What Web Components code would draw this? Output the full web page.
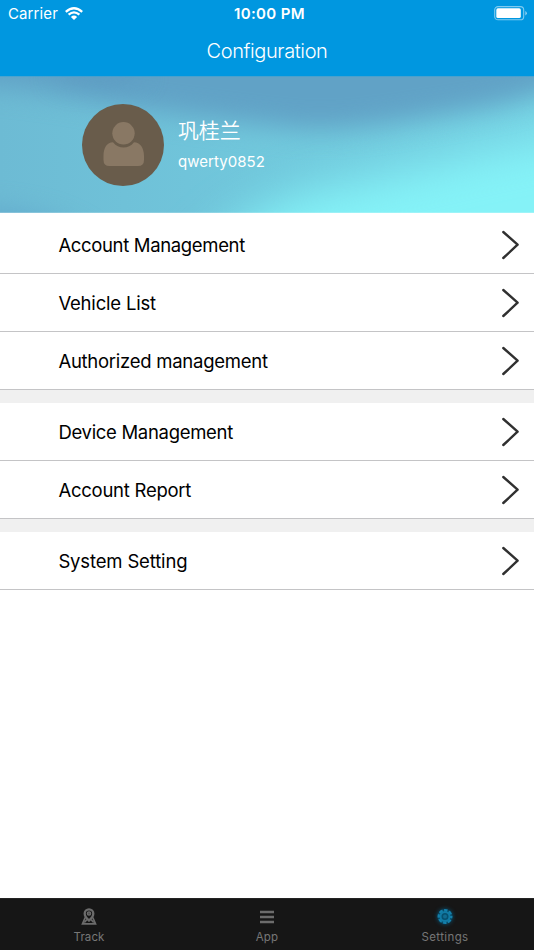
<!DOCTYPE html>
<html lang="en">
<head>
<meta charset="utf-8">
<title>Configuration</title>
<style>
html,body{margin:0;height:100%;background:#fff;overflow:hidden}
body{font-family:Inter,"Noto Sans CJK SC",sans-serif}
</style>
</head>
<body>
<settings-screen></settings-screen>
<script>
function define(name, html, setup) {
  const t = document.createElement('template');
  t.innerHTML = html;
  customElements.define(name, class extends HTMLElement {
    connectedCallback() {
      if (this.shadowRoot) return;
      this.attachShadow({ mode: 'open' }).append(t.content.cloneNode(true));
      if (setup) setup(this, this.shadowRoot);
    }
  });
}

/* Single-line label whose tracking is adjusted to span the given width. */
define('fit-label', `<style>:host{display:block;white-space:nowrap;width:max-content}span{display:inline-block}</style><span></span>`, (el, root) => {
  const s = root.querySelector('span');
  s.textContent = el.getAttribute('text');
  const w = parseFloat(el.getAttribute('span'));
  const n = s.textContent.length;
  const now = s.getBoundingClientRect().width;
  s.style.letterSpacing = ((w - now) / n).toFixed(3) + 'px';
});

define('status-bar', `<style>
:host{display:grid;grid-template-columns:1fr auto 1fr;grid-template-rows:27px;align-items:center;height:27px;padding:0 7px 0 8px;color:#fff;font-size:15px;line-height:26px}
.l{display:flex;align-items:center;gap:7px}.r{display:flex;justify-content:flex-end}
.l fit-label{padding-top:1px}
.t{font-weight:600;font-size:15px;padding-left:4px}
svg{display:block}
</style>
<div class="l"><fit-label text="Carrier" span="50"></fit-label>
<svg width="18" height="14" viewBox="0 0 18 14" fill="none" stroke="#fff" stroke-width="2.3"><path d="M.8 4.8Q9-2.2 17.2 4.8M3.6 7.7Q9 3 14.4 7.7"/><path d="M9 13 5.9 9.9Q9 7.3 12.1 9.9Z" fill="#fff" stroke="none"/></svg></div>
<fit-label class="t" text="10:00 PM" span="71"></fit-label>
<div class="r"><svg width="33" height="15" viewBox="0 0 33 15"><rect x=".7" y=".6" width="29" height="13.2" rx="3.4" fill="none" stroke="#fff" stroke-opacity=".5" stroke-width="1.1"/><rect x="2.3" y="2.3" width="24.5" height="9.7" rx="1.6" fill="#fff"/><path d="M31.400 5q1.4.7 1.4 2.2T31.400 9.500z" fill="#fff" fill-opacity=".6"/></svg></div>`);

define('nav-bar', `<style>
:host{display:flex;flex-direction:column;height:76px;background:#0097e0;color:#fff}
.title{display:flex;justify-content:center;align-items:center;height:49px;font-size:20px;line-height:49px;font-weight:350}
</style><status-bar></status-bar><div class="title"><fit-label text="Configuration" span="121"></fit-label></div>`);

define('user-avatar', `<style>:host{display:block;width:82px;height:82px}svg{display:block}</style>
<svg width="82" height="82" viewBox="0 0 82 82"><circle cx="41" cy="41" r="41" fill="#695c4b"/><circle cx="41.5" cy="29.3" r="11.2" fill="#897864"/><path d="M31 38.3C34 42.2 37.5 43.5 41.5 43.5S49 42.2 52 38.3C58 38.3 62 44 62 52V56Q62 62 56 62H27.500Q21.500 62 21.500 56V52C21.500 44 25 38.300 31 38.300Z" fill="#897864"/></svg>`);

define('profile-hero', `<style>
:host{display:grid;height:137px;overflow:hidden;color:#fff}
.bg,.c{grid-area:1/1}.bg{display:block;width:534px;height:137px}
.c{display:flex;align-items:flex-start;padding:28px 0 0 82px;gap:14px;z-index:1}
.n{font-size:21px;line-height:28px;margin-top:11px;font-family:"Noto Sans CJK SC",sans-serif;font-weight:350}
.u{font-size:15px;line-height:20px;margin-top:9px;font-weight:400}
</style>
<svg class="bg" viewBox="0 0 534 137" preserveAspectRatio="none">
<defs><linearGradient id="b" x1="0" y1="0" x2="1" y2="0"><stop offset="0" stop-color="#6dbbd4"/><stop offset=".35" stop-color="#70c4da"/><stop offset=".6" stop-color="#72cbde"/><stop offset="1" stop-color="#76d3e4"/></linearGradient>
<filter id="f" filterUnits="userSpaceOnUse" x="-150" y="-150" width="850" height="450" color-interpolation-filters="sRGB"><feGaussianBlur stdDeviation="13"/></filter>
<filter id="g" filterUnits="userSpaceOnUse" x="-150" y="-150" width="850" height="450" color-interpolation-filters="sRGB"><feGaussianBlur stdDeviation="23"/></filter></defs>
<rect width="534" height="137" fill="url(#b)"/>
<path d="M170 240C205 155 270 122 345 108C425 92 510 64 700 40V240Z" fill="#85f2f7" filter="url(#g)"/>
<path d="M-80-80H660V-30C575 10 520 27 475 34C410 44 350 57 298 53C235 46 175 38 115 29C60 18 30 12-80 6Z" fill="#61a2c6" filter="url(#f)"/>
<path d="M-80 134C10 130 60 138 100 174H-80Z" fill="#62a9cc" filter="url(#f)"/>
<ellipse cx="99" cy="0" rx="48" ry="9" fill="#5993bd" opacity=".5" filter="url(#f)"/>
<path d="M0 .5H534" stroke="#1ea0dc" opacity=".35"/>
<path d="M0 136.500H534" stroke="#fff" opacity=".2"/>
</svg>
<div class="c"><user-avatar></user-avatar><div><fit-label class="n" text="巩桂兰" span="62.5"></fit-label><fit-label class="u" text="qwerty0852" span="87"></fit-label></div></div>`);

define('menu-row', `<style>
:host{display:flex;align-items:center;justify-content:space-between;box-sizing:border-box;height:58px;padding:1px 14px 0 58.4px;background:#fff;border-bottom:1px solid #c4c4c6;color:#000;font-size:18.5px;line-height:24px}
:host([first]){height:61px;padding-top:4px}
svg{display:block}
</style><slot></slot><svg width="20" height="30" viewBox="0 0 20 30" fill="none" stroke="#303030" stroke-width="2.400" stroke-linecap="round" stroke-linejoin="round"><path d="M3.300 2 17.600 14.700 3.300 28"/></svg>`);

define('menu-group', `<style>:host{display:block}:host(:not(:first-of-type)){border-top:13px solid #f0f0f0}</style><slot></slot>`);

const icons = {
  track: `<g fill="none" stroke="#6c6c6c" stroke-width="1.700"><path d="M4.200 9.500 1.500 15.800H14.500L11.800 9.500"/><path d="M3.700 5.600a4.300 4.300 0 1 1 8.600 0C12.300 9 8 12.500 8 12.500S3.700 9 3.700 5.600Z" stroke-width="2.300"/><circle cx="8" cy="5.500" r="1.700" fill="#555" stroke-width="1.200"/><path d="M3.300 14.500 6 11.500M12.700 14.500 10 11.500"/></g>`,
  app: `<path d="M1 4H15M1 9H15M1 14H15" stroke="#6c6c6c" stroke-width="2.300"/>`,
  settings: `<circle cx="8" cy="8.500" r="7.300" fill="#07516f" opacity=".7"/><circle cx="8" cy="8.500" r="6.200" fill="none" stroke="#147faa" stroke-width="2.500" stroke-dasharray="3.400 1.470" stroke-dashoffset="1.700"/><circle cx="8" cy="8.500" r="4.500" fill="none" stroke="#117aa4" stroke-width="2"/><circle cx="8" cy="8.500" r="2" fill="#126c91"/>`
};
define('tab-item', `<style>
:host{flex:1;display:flex;flex-direction:column;align-items:center;color:#777;font-size:11.500px;line-height:16px;padding-top:10px}
svg{display:block;overflow:visible;margin-bottom:4px}
:host([icon=settings]) svg{filter:drop-shadow(0 0 2px #075b82)}
</style><svg width="16" height="17" viewBox="0 0 16 17"></svg><slot></slot>`, (el, root) => {
  root.querySelector('svg').innerHTML = icons[el.getAttribute('icon')];
});
define('tab-bar', `<style>:host{display:flex;height:52px;background:#161616;box-shadow:inset 0 1px #242424}</style><slot></slot>`);

define('settings-screen', `<style>:host{display:flex;flex-direction:column;height:950px;width:534px;background:#fff}main{flex:1}</style>
<nav-bar></nav-bar><profile-hero></profile-hero>
<main>
<menu-group><menu-row first><fit-label text="Account Management" span="186.500"></fit-label></menu-row><menu-row><fit-label text="Vehicle List" span="97.500"></fit-label></menu-row><menu-row><fit-label text="Authorized management" span="209.300"></fit-label></menu-row></menu-group>
<menu-group><menu-row><fit-label text="Device Management" span="174.500"></fit-label></menu-row><menu-row><fit-label text="Account Report" span="132.800"></fit-label></menu-row></menu-group>
<menu-group><menu-row><fit-label text="System Setting" span="129"></fit-label></menu-row></menu-group>
</main>
<tab-bar><tab-item icon="track"><fit-label text="Track" span="31"></fit-label></tab-item><tab-item icon="app"><fit-label text="App" span="22.500"></fit-label></tab-item><tab-item icon="settings"><fit-label text="Settings" span="47"></fit-label></tab-item></tab-bar>`);
</script>
</body>
</html>
